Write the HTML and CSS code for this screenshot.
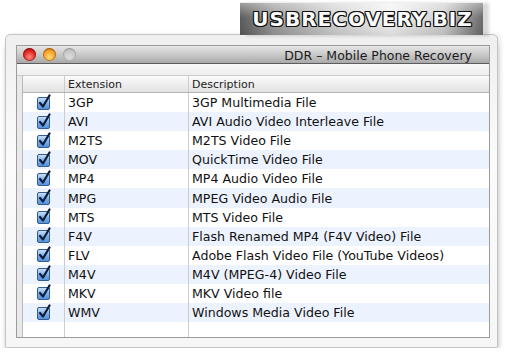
FILE: index.html
```html
<!DOCTYPE html>
<html lang="en">

<head>
   <meta charset="UTF-8" />
   <meta name="viewport" content="width=device-width, initial-scale=1.0" />
   <title>DDR - Mobile Phone Recovery</title>
   <link rel="stylesheet" href="styles.css">
</head>

<body>
   <div class="banner"><span>USBRECOVERY.BIZ</span></div>

   <div class="frame">
      <div class="window">
         <div class="titlebar">
            <div class="lights">
               <i class="light close"></i>
               <i class="light minimize"></i>
               <i class="light zoom"></i>
            </div>
            <div class="title">DDR – Mobile Phone Recovery</div>
         </div>
         <div class="toolbar"></div>

         <div class="list">
            <div class="row head">
               <div class="cell"></div>
               <div class="cell">Extension</div>
               <div class="cell">Description</div>
            </div>
            <div id="rows"></div>
            <div class="row filler">
               <div class="cell"></div>
               <div class="cell"></div>
               <div class="cell"></div>
            </div>
         </div>
      </div>
   </div>

   <script>
      const formats = [
         ['3GP', '3GP Multimedia File'],
         ['AVI', 'AVI Audio Video Interleave File'],
         ['M2TS', 'M2TS Video File'],
         ['MOV', 'QuickTime Video File'],
         ['MP4', 'MP4 Audio Video File'],
         ['MPG', 'MPEG Video Audio File'],
         ['MTS', 'MTS Video File'],
         ['F4V', 'Flash Renamed MP4 (F4V Video) File'],
         ['FLV', 'Adobe Flash Video File (YouTube Videos)'],
         ['M4V', 'M4V (MPEG-4) Video File'],
         ['MKV', 'MKV Video file'],
         ['WMV', 'Windows Media Video File']
      ];

      const checkbox = `<svg class="check" width="16" height="16" viewBox="0 0 16 16">
         <defs>
            <linearGradient id="cbFill" x1="0" y1="0" x2="0" y2="1">
               <stop offset="0" stop-color="#cfe3fa"/>
               <stop offset="0.5" stop-color="#7fb0ea"/>
               <stop offset="1" stop-color="#4f8fdc"/>
            </linearGradient>
         </defs>
         <rect x="1.5" y="3.5" width="12" height="12" rx="1.5" fill="url(#cbFill)" stroke="#355c8f"/>
         <path d="M4 9 L7 12.5 L13.5 1.5" fill="none" stroke="#0c1c3a" stroke-width="2.2" stroke-linecap="round" stroke-linejoin="round"/>
      </svg>`;

      document.getElementById('rows').innerHTML = formats.map(function (f) {
         return `<div class="row item">
            <div class="cell box">${checkbox}</div>
            <div class="cell">${f[0]}</div>
            <div class="cell">${f[1]}</div>
         </div>`;
      }).join('');
   </script>
</body>

</html>
```

FILE: styles.css
```css
*,
*::before,
*::after {
   margin: 0;
   padding: 0;
   box-sizing: border-box;
}

body {
   font-family: "DejaVu Sans", "Liberation Sans", sans-serif;
   background-color: #fff;
   color: #111;
   padding-top: 2px;
}

/* logo strip at the top */
.banner {
   width: 243px;
   height: 33px;
   margin-left: 240px;
   display: flex;
   justify-content: center;
   align-items: center;
   border-top: 1px solid #eeeeee;
   background:
      linear-gradient(rgba(255, 255, 255, 0.4), rgba(255, 255, 255, 0) 45%, rgba(0, 0, 0, 0.1)),
      linear-gradient(90deg, #5c5c5c, #9c9c9c 14%, #d2d2d2 38%, #f3f3f3 62%, #d0d0d0 84%, #6c6c6c);
   box-shadow: 6px 1px 3px rgba(0, 0, 0, 0.15);
   position: relative;
   z-index: 2;
}

.banner span {
   font-family: "DejaVu Sans", sans-serif;
   font-weight: bold;
   font-size: 20px;
   letter-spacing: 1px;
   color: #fafafa;
   padding-left: 2px;
   text-shadow:
      1px 0 0 #111, -1px 0 0 #111, 0 1px 0 #111, 0 -1px 0 #111,
      1px 1px 0 #111, -1px -1px 0 #111, 1px -1px 0 #111, -1px 1px 0 #111;
}

.frame {
   width: 493px;
   height: 314px;
   margin: -1px 0 0 5px;
   padding: 10px 7px 9px 10px;
   border: 1px solid #c4c4c4;
   border-radius: 5px 5px 2px 2px;
   background: linear-gradient(#efefef, #fbfbfb 40%, #f6f6f6);
   box-shadow: 0 8px 6px -3px rgba(0, 0, 0, 0.55), 3px 0 4px rgba(0, 0, 0, 0.08);
}

.window {
   height: 100%;
   display: flex;
   flex-direction: column;
   border: 1px solid #9c9c9c;
   background-color: #e9e9e9;
}

.titlebar {
   height: 18px;
   flex: none;
   display: flex;
   align-items: center;
   justify-content: space-between;
   padding: 0 17px 0 6px;
   background: linear-gradient(#e6e6e6, #c9c9c9 50%, #a9a9a9);
   border-bottom: 1px solid #5d5d5d;
}

.lights {
   display: flex;
   gap: 7px;
}

.light {
   display: block;
   width: 13px;
   height: 13px;
   border-radius: 50%;
}

.close {
   background: radial-gradient(circle at 50% 70%, #ff8a80, #e0231d 55%, #8f0c0a);
   box-shadow: inset 0 0 0 1px rgba(90, 0, 0, 0.45);
}

.minimize {
   background: radial-gradient(circle at 50% 70%, #ffd77a, #f2a325 55%, #a9590a);
   box-shadow: inset 0 0 0 1px rgba(110, 50, 0, 0.45);
}

.zoom {
   background: radial-gradient(circle at 50% 70%, #dedede, #c4c4c4 60%, #9e9e9e);
   box-shadow: inset 0 0 0 1px rgba(0, 0, 0, 0.15);
}

.title {
   font-size: 12.5px;
   color: #1a1a1a;
   padding-top: 1px;
}

.toolbar {
   height: 12px;
   flex: none;
   background: linear-gradient(#f7f7f7, #eeeeee);
   border-bottom: 1px solid #c9c9c9;
}

.list {
   flex: 1;
   display: flex;
   flex-direction: column;
   margin-left: 5px;
   border-left: 1px solid #b9b9b9;
   background-color: #fff;
}

.row {
   display: grid;
   grid-template-columns: 42px 124px 1fr;
}

.cell {
   padding-left: 3px;
   white-space: nowrap;
   overflow: hidden;
   display: flex;
   align-items: center;
}

.cell:nth-child(-n+2) {
   border-right: 1px solid #cdcdcd;
}

.head {
   height: 17px;
   font-size: 11px;
   color: #222;
   background: linear-gradient(#fbfbfb, #ececec 60%, #e2e2e2);
   border-bottom: 1px solid #b3b3b3;
}

.item {
   height: 19.1px;
   font-size: 12.6px;
}

.item:nth-child(even) {
   background-color: #edf3fe;
}

.box {
   justify-content: center;
   padding-left: 0;
}

.check {
   display: block;
   margin-top: -2px;
}

.filler {
   flex: 1;
}
```
